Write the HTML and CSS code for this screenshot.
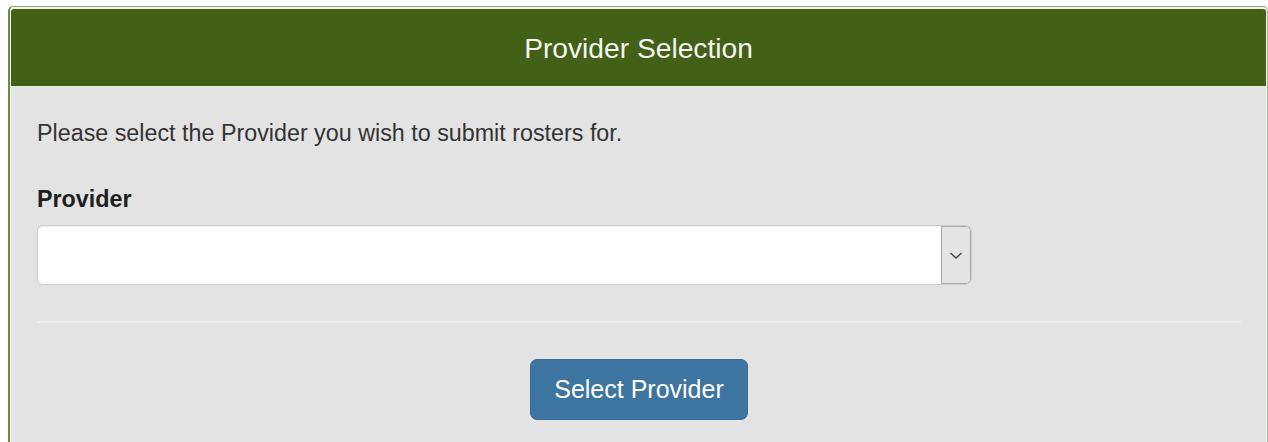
FILE: index.html
```html
<!DOCTYPE html>
<html lang="en">
<head>
<meta charset="utf-8">
<title>Provider Selection</title>
<link rel="stylesheet" href="styles.css">
</head>
<body>
<div class="panel">
  <div class="panel-heading">
    <h3 class="panel-title">Provider Selection</h3>
  </div>
  <div class="panel-body">
    <p class="intro">Please select the Provider you wish to submit rosters for.</p>
    <form class="provider-form">
      <label class="field-label" for="provider">Provider</label>
      <div class="select-box">
        <select id="provider" class="select-input">
          <option value=""></option>
        </select>
        <span class="select-caret">
          <svg width="14" height="9" viewBox="0 0 14 9" aria-hidden="true">
            <polyline points="1.5,2 7,7 12.5,2" fill="none" stroke="#4a4a4a" stroke-width="1.5"/>
          </svg>
        </span>
      </div>
      <hr class="divider">
      <div class="actions">
        <button type="button" class="btn-primary">Select Provider</button>
      </div>
    </form>
  </div>
</div>
</body>
</html>
```
FILE: styles.css
```css
html, body {
  margin: 0;
  background: #ffffff;
}

body {
  font-family: Arial, "Liberation Sans", Helvetica, sans-serif;
}

.panel {
  margin: 6px 0 0 8px;
  border: 1px solid #8ba46f;
  border-left: 2px solid #6a8a48;
  border-right-color: #a9b79a;
  border-bottom: 0;
  border-radius: 5px 5px 0 0;
  padding: 2px 1px 0 1px;
  background: #f3f6ef;
}

.panel-heading {
  height: 77px;
  background: #426016;
  border-bottom: 1px solid #e8eee0;
  border-radius: 3px 3px 0 0;
  display: flex;
  align-items: center;
  justify-content: center;
}

.panel-title {
  margin: 0;
  font-size: 28.2px;
  font-weight: normal;
  color: #f4f4f4;
  line-height: 32px;
  padding-top: 1px;
}

.panel-body {
  background: #e3e3e3;
  padding: 30px 25px 40px 26px;
}

.intro {
  margin: 0;
  font-size: 23.3px;
  line-height: 33px;
  color: #333333;
}

.provider-form {
  margin: 0;
}

.field-label {
  display: block;
  margin: 33px 0 9px;
  font-size: 23.3px;
  line-height: 33px;
  font-weight: bold;
  color: #1f1f1f;
}

.select-box {
  display: flex;
  width: 935px;
  height: 60px;
  box-sizing: border-box;
  border: 1px solid #cccccc;
  border-radius: 6px;
  background: #ffffff;
  box-shadow: inset 0 1px 1px rgba(0, 0, 0, 0.06);
  overflow: hidden;
}

.select-input {
  flex: 1;
  appearance: none;
  -webkit-appearance: none;
  border: 0;
  background: transparent;
  font-family: inherit;
  font-size: 23px;
  outline: none;
}

.select-caret {
  width: 30px;
  box-sizing: border-box;
  display: flex;
  align-items: center;
  justify-content: center;
  background: #e4e4e4;
  border: 1px solid #ababab;
  border-radius: 0 5px 5px 0;
}

.divider {
  margin: 36px 0 0;
  height: 2px;
  border: 0;
  background: #ededed;
}

.actions {
  display: flex;
  justify-content: center;
  padding-top: 36px;
}

.btn-primary {
  width: 218px;
  height: 61px;
  background: #3e74a0;
  border: 1px solid #39699a;
  border-radius: 7px;
  color: #ffffff;
  font-family: inherit;
  font-size: 25px;
  cursor: pointer;
}
```
